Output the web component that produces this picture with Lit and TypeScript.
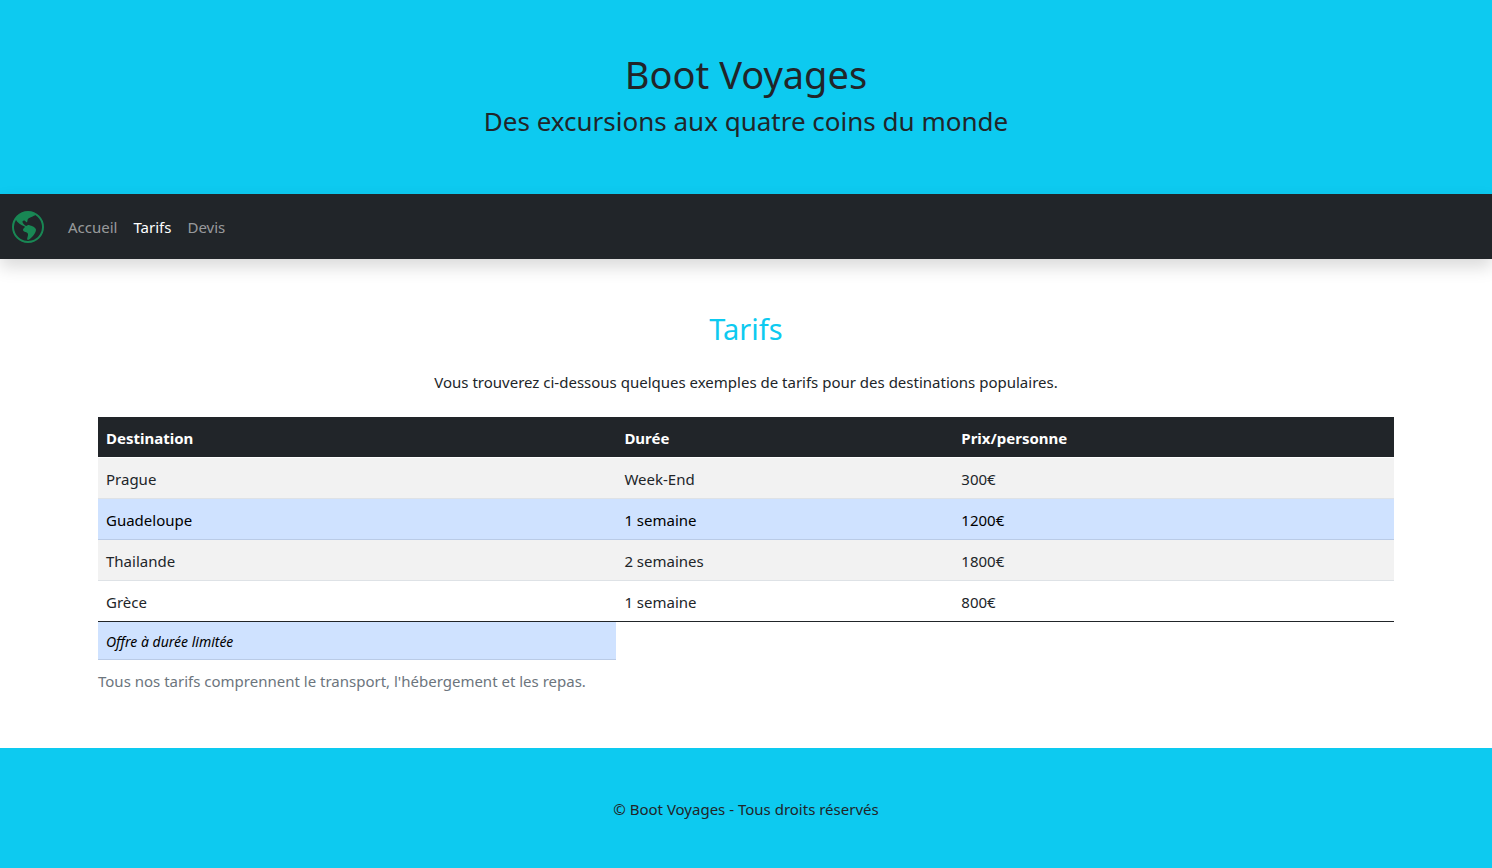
import { LitElement, html, css } from "lit";
import { customElement, state } from "lit/decorators.js";

interface Offer {
  destination: string;
  duration: string;
  price: string;
  limited?: boolean;
}

const offers: Offer[] = [
  { destination: "Prague", duration: "Week-End", price: "300€" },
  { destination: "Guadeloupe", duration: "1 semaine", price: "1200€", limited: true },
  { destination: "Thailande", duration: "2 semaines", price: "1800€" },
  { destination: "Grèce", duration: "1 semaine", price: "800€" },
];

const links = ["Accueil", "Tarifs", "Devis"];

@customElement("app-root")
export class AppRoot extends LitElement {
  @state() private current = "Tarifs";

  static styles = css`
    :host {
      display: flex;
      flex-direction: column;
      min-height: 100vh;
      font-family: "Segoe UI", "Noto Sans", "Liberation Sans", sans-serif;
      font-size: 15px;
      line-height: 24px;
      color: #212529;
      background: #fff;
    }
    *, *::before, *::after { box-sizing: border-box; }
    h1, h2, p { margin: 0; font-weight: 400; }
    .banner {
      padding: 48px 48px 52px;
      text-align: center;
      background: #0dcaf0;
    }
    .title { font-size: 38px; line-height: 52px; }
    .subtitle { font-size: 26px; line-height: 42px; }
    .bar {
      display: flex;
      align-items: center;
      gap: 16px;
      padding: 8px 12px;
      min-height: 65px;
      background: #212529;
      box-shadow: 0 8px 16px rgba(0, 0, 0, 0.15);
    }
    .brand { display: flex; color: #198754; }
    .menu { display: flex; list-style: none; margin: 0; padding: 0; }
    .link {
      display: block;
      padding: 8px;
      color: rgba(255, 255, 255, 0.55);
      text-decoration: none;
    }
    .link.active { color: #fff; }
    .content { flex: 1; padding: 48px 98px; }
    .heading {
      font-size: 29px;
      line-height: 44px;
      text-align: center;
      color: #0dcaf0;
    }
    .intro { padding: 19px 0 23px; text-align: center; }
    .prices {
      width: 100%;
      border-collapse: collapse;
      table-layout: fixed;
      margin-bottom: 9px;
    }
    .first { width: 40%; }
    .second { width: 26%; }
    th, td { padding: 9px 8px 7px; text-align: left; border-bottom: 1px solid #dee2e6; }
    th { color: #fff; background: #212529; border-color: #fff; font-weight: 700; }
    .row:nth-child(odd) td { background: #f2f2f2; }
    .row.limited td { color: #000; background: #cfe2ff; border-color: #bacbe6; }
    .row:last-child td { border-color: #212529; }
    .legend { font-size: 14px; line-height: 21px; font-style: italic; color: #000; background: #cfe2ff; border-color: #bacbe6; }
    .note { color: #6c757d; }
    .footer { padding: 49px 48px 47px; text-align: center; background: #0dcaf0; }
  `;

  private go(event: Event, name: string) {
    event.preventDefault();
    this.current = name;
  }

  render() {
    return html`
      <header class="banner">
        <h1 class="title">Boot Voyages</h1>
        <p class="subtitle">Des excursions aux quatre coins du monde</p>
      </header>
      <nav class="bar">
        <a class="brand" href="#" aria-label="Boot Voyages">
          <svg width="32" height="32" viewBox="0 0 16 16" fill="currentColor" aria-hidden="true">
            <path d="M8 0a8 8 0 1 0 0 16A8 8 0 0 0 8 0ZM2.04 4.326c.325 1.329 2.532 2.54 3.717 3.19.48.263.793.434.743.484-.08.08-.162.158-.242.234-.416.396-.787.749-.758 1.266.035.634.618.824 1.214 1.017.577.188 1.168.38 1.286.983.082.417-.075.988-.22 1.52-.215.782-.406 1.48.22 1.48 1.5-.5 3.798-3.186 4-5 .138-1.243-2-2-3.5-2.5-.478-.16-.755.081-.99.284-.172.15-.322.279-.51.216-.445-.148-2.5-2-1.5-2.5.78-.39.952-.171 1.227.182.078.099.163.208.273.318.609.304.662-.132.723-.633.039-.322.081-.671.277-.867.434-.434 1.265-.791 2.028-1.12.712-.306 1.365-.587 1.579-.88A7 7 0 1 1 2.04 4.327Z" />
          </svg>
        </a>
        <ul class="menu">
          ${links.map(
            (name) => html`<li>
              <a class="link ${name === this.current ? "active" : ""}" href="#" @click=${(e: Event) => this.go(e, name)}>${name}</a>
            </li>`
          )}
        </ul>
      </nav>
      <main class="content">
        <h2 class="heading">Tarifs</h2>
        <p class="intro">Vous trouverez ci-dessous quelques exemples de tarifs pour des destinations populaires.</p>
        <table class="prices">
          <colgroup><col class="first" /><col class="second" /><col /></colgroup>
          <thead>
            <tr><th scope="col">Destination</th><th scope="col">Durée</th><th scope="col">Prix/personne</th></tr>
          </thead>
          <tbody>
            ${offers.map(
              (o) => html`<tr class="row ${o.limited ? "limited" : ""}">
                <td>${o.destination}</td><td>${o.duration}</td><td>${o.price}</td>
              </tr>`
            )}
          </tbody>
          <tfoot>
            <tr><td class="legend">Offre à durée limitée</td></tr>
          </tfoot>
        </table>
        <p class="note">Tous nos tarifs comprennent le transport, l'hébergement et les repas.</p>
      </main>
      <footer class="footer">© Boot Voyages - Tous droits réservés</footer>
    `;
  }
}
